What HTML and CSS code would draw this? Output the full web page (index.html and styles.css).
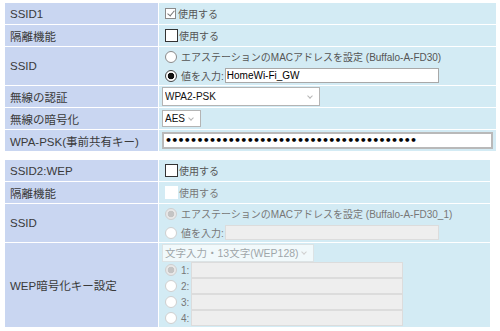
FILE: index.html
```html
<!DOCTYPE html>
<html>
<head>
    <title>無線設定</title>
    <meta charset="UTF-8">
    <link rel="stylesheet" href="styles.css">
</head>
<body>
    <!-- SSID1 -->
    <table class="settings ssid1">
        <tr>
            <th>SSID1</th>
            <td><label class="line"><input type="checkbox" class="chk chk-on" checked>使用する</label></td>
        </tr>
        <tr>
            <th>隔離機能</th>
            <td><label class="line"><input type="checkbox" class="chk">使用する</label></td>
        </tr>
        <tr>
            <th>SSID</th>
            <td class="multi">
                <label class="line"><input type="radio" name="ssid1" class="rad">エアステーションのMACアドレスを設定 (Buffalo-A-FD30)</label>
                <label class="line"><input type="radio" name="ssid1" class="rad" checked>値を入力:<input type="text" class="txt ssid-txt" value="HomeWi-Fi_GW"></label>
            </td>
        </tr>
        <tr>
            <th>無線の認証</th>
            <td>
                <span class="sel"><select class="auth"><option>WPA2-PSK</option></select></span>
            </td>
        </tr>
        <tr>
            <th>無線の暗号化</th>
            <td>
                <span class="sel"><select class="enc"><option>AES</option></select></span>
            </td>
        </tr>
        <tr>
            <th>WPA-PSK(事前共有キー)</th>
            <td><input type="password" class="txt psk" value="0123456789012345678901234567890123456789"></td>
        </tr>
    </table>

    <!-- SSID2 -->
    <table class="settings ssid2">
        <tr>
            <th>SSID2:WEP</th>
            <td><label class="line"><input type="checkbox" class="chk">使用する</label></td>
        </tr>
        <tr>
            <th>隔離機能</th>
            <td><label class="line off"><input type="checkbox" class="chk" disabled>使用する</label></td>
        </tr>
        <tr>
            <th>SSID</th>
            <td class="multi">
                <label class="line off"><input type="radio" name="ssid2" class="rad" checked disabled>エアステーションのMACアドレスを設定 (Buffalo-A-FD30_1)</label>
                <label class="line off"><input type="radio" name="ssid2" class="rad" disabled>値を入力:<input type="text" class="txt ssid-txt" disabled></label>
            </td>
        </tr>
        <tr>
            <th>WEP暗号化キー設定</th>
            <td class="multi wep-cell">
                <span class="sel sel-off"><select class="wep" disabled><option>文字入力・13文字(WEP128)</option></select></span>
                <div class="keys">
                    <label class="key off"><input type="radio" name="wepkey" class="rad" checked disabled>1:<input type="text" class="txt key-txt" disabled></label>
                    <label class="key off"><input type="radio" name="wepkey" class="rad" disabled>2:<input type="text" class="txt key-txt" disabled></label>
                    <label class="key off"><input type="radio" name="wepkey" class="rad" disabled>3:<input type="text" class="txt key-txt" disabled></label>
                    <label class="key off"><input type="radio" name="wepkey" class="rad" disabled>4:<input type="text" class="txt key-txt" disabled></label>
                </div>
            </td>
        </tr>
    </table>
</body>
</html>
```

FILE: styles.css
```css
body {
    margin: 0;
    padding: 2px 4px;
    background: #fff;
    font-family: 'Liberation Sans', 'Noto Sans CJK JP', sans-serif;
    color: #444;
}
.settings {
    border-collapse: separate;
    border-spacing: 1px;
}
.ssid1 {
    width: 493px;
}
.ssid2 {
    width: 487px;
    margin-top: 7px;
}
th {
    width: 143px;
    height: 21px;
    padding: 0 5px;
    background-color: #c9d6f1;
    font-size: 11.5px;
    font-weight: normal;
    color: #3a3a3a;
    text-align: left;
    vertical-align: middle;
}
td {
    height: 21px;
    padding: 0 3px;
    background-color: #d3ebf4;
    font-size: 10px;
    color: #555;
    vertical-align: middle;
}
td.multi {
    padding-top: 0;
    padding-bottom: 0;
}
td.wep-cell {
    padding-top: 1px;
    padding-bottom: 1px;
}
.line {
    display: flex;
    align-items: center;
    height: 19px;
    white-space: nowrap;
}
.off {
    color: #777;
}

/* checkbox / radio */
.chk, .rad {
    -webkit-appearance: none;
    appearance: none;
    margin: 0 1px 0 3px;
    box-sizing: border-box;
    flex: none;
}
.chk {
    width: 13px;
    height: 13px;
    border: 1px solid #333;
    background: #fff;
    position: relative;
}
.chk-on {
    width: 11px;
    height: 11px;
    margin: 0 2px 0 3px;
    border-color: #8a8a8a;
}
.chk-on::after {
    content: '';
    position: absolute;
    left: 3px;
    top: 0;
    width: 3px;
    height: 6px;
    border: solid #777;
    border-width: 0 1px 1px 0;
    transform: rotate(40deg);
}
.chk:disabled {
    border-color: #fff;
}
.rad {
    width: 12px;
    height: 12px;
    margin-right: 4px;
    border: 1px solid #8a8a8a;
    border-radius: 50%;
    background: #fff;
}
.rad:checked {
    border-color: #444;
    background: radial-gradient(circle, #111 0 3px, #fff 3.6px);
}
.rad:disabled {
    border-color: #cfcfcf;
}
.rad:checked:disabled {
    background: radial-gradient(circle, #c4c4c4 0 3px, #e8e8e8 3.6px);
}

/* text inputs */
.txt {
    box-sizing: border-box;
    margin: 0;
    padding: 0 1px;
    border: 1px solid #a8a8a8;
    background: #fff;
    font-family: 'Liberation Sans', 'Noto Sans CJK JP', sans-serif;
    font-size: 10px;
    color: #000;
    outline: none;
}
.txt:disabled {
    border-color: #dcdcdc;
    background: #eee;
}
.ssid-txt {
    width: 214px;
    height: 15px;
    margin-left: 1px;
}
.psk {
    display: block;
    width: 331px;
    height: 17px;
    border: 2px solid #b9b9b9;
    padding: 0 1px;
    font-family: 'DejaVu Sans', sans-serif;
    font-size: 11px;
    font-weight: bold;
    letter-spacing: -0.75px;
}

/* selects */
.sel {
    position: relative;
    display: inline-block;
    vertical-align: middle;
}
.sel::after {
    content: '';
    position: absolute;
    right: 8px;
    top: 50%;
    width: 3px;
    height: 3px;
    margin-top: -3px;
    border: solid #b5b5b5;
    border-width: 0 1px 1px 0;
    transform: rotate(45deg);
    pointer-events: none;
}
select {
    -webkit-appearance: none;
    appearance: none;
    box-sizing: border-box;
    margin: 0;
    padding: 0 2px;
    border: 1px solid #b4b4b4;
    border-radius: 0;
    background: #fff;
    font-family: 'Liberation Sans', 'Noto Sans CJK JP', sans-serif;
    font-size: 10px;
    color: #111;
    display: block;
}
.auth {
    width: 158px;
    height: 19px;
}
.enc {
    width: 39px;
    height: 17px;
}
.wep {
    width: 152px;
    height: 18px;
    border-color: #e0e0e0;
    font-size: 10.5px;
    color: #8a8a8a;
}
.sel-off::after {
    border-color: #d0d0d0;
}

/* WEP keys */
.keys {
    display: flex;
    flex-direction: column;
}
.key {
    display: flex;
    align-items: center;
    height: 16px;
    white-space: nowrap;
}
.key .txt {
    margin-left: 2px;
}
.key-txt {
    width: 212px;
    height: 16px;
}
```
